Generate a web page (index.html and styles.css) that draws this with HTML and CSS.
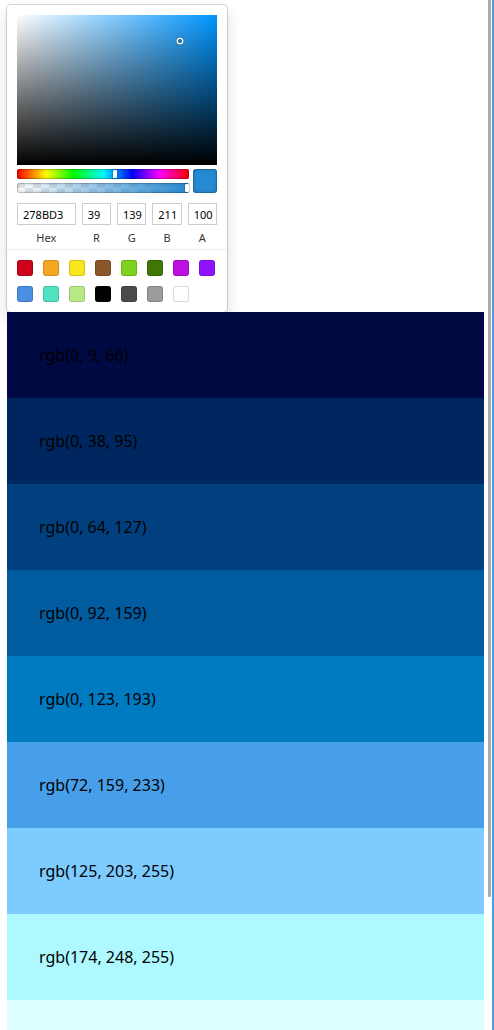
FILE: index.html
```html
<!DOCTYPE html>
<html>
<head>
<meta charset="utf-8">
<link rel="stylesheet" href="styles.css">
</head>
<body>
<div class="page">
  <main class="main">
    <div class="picker">
      <div class="saturation">
        <div class="sat-white"><div class="sat-black"></div></div>
        <div class="sat-pointer"></div>
      </div>
      <div class="controls">
        <div class="sliders">
          <div class="hue"><div class="hue-pointer"></div></div>
          <div class="alpha"><div class="alpha-pointer"></div></div>
        </div>
        <div class="active-color"></div>
      </div>
      <div class="fields">
        <label class="field double"><span class="input">278BD3</span><span class="label">Hex</span></label>
        <label class="field"><span class="input">39</span><span class="label">R</span></label>
        <label class="field"><span class="input">139</span><span class="label">G</span></label>
        <label class="field"><span class="input">211</span><span class="label">B</span></label>
        <label class="field"><span class="input">100</span><span class="label">A</span></label>
      </div>
      <div class="presets">
        <div class="preset" style="background:#D0021B"></div>
        <div class="preset" style="background:#F5A623"></div>
        <div class="preset" style="background:#F8E71C"></div>
        <div class="preset" style="background:#8B572A"></div>
        <div class="preset" style="background:#7ED321"></div>
        <div class="preset" style="background:#417505"></div>
        <div class="preset" style="background:#BD10E0"></div>
        <div class="preset" style="background:#9013FE"></div>
        <div class="preset" style="background:#4A90E2"></div>
        <div class="preset" style="background:#50E3C2"></div>
        <div class="preset" style="background:#B8E986"></div>
        <div class="preset" style="background:#000000"></div>
        <div class="preset" style="background:#4A4A4A"></div>
        <div class="preset" style="background:#9B9B9B"></div>
        <div class="preset" style="background:#FFFFFF"></div>
      </div>
    </div>
    <div class="rows">
      <div class="row" style="background:rgb(0, 9, 66)">rgb(0, 9, 66)</div>
      <div class="row" style="background:rgb(0, 38, 95)">rgb(0, 38, 95)</div>
      <div class="row" style="background:rgb(0, 64, 127)">rgb(0, 64, 127)</div>
      <div class="row" style="background:rgb(0, 92, 159)">rgb(0, 92, 159)</div>
      <div class="row" style="background:rgb(0, 123, 193)">rgb(0, 123, 193)</div>
      <div class="row" style="background:rgb(72, 159, 233)">rgb(72, 159, 233)</div>
      <div class="row" style="background:rgb(125, 203, 255)">rgb(125, 203, 255)</div>
      <div class="row" style="background:rgb(174, 248, 255)">rgb(174, 248, 255)</div>
      <div class="row last" style="background:rgb(222, 255, 255)"></div>
    </div>
  </main>
  <div class="track"><div class="thumb"></div></div>
  <div class="edge"></div>
</div>
</body>
</html>
```
FILE: styles.css
```css
html, body {
  margin: 0;
  padding: 0;
  height: 1030px;
  overflow: hidden;
  background: #fff;
}
body {
  font-family: "Noto Sans", "Open Sans", sans-serif;
}
.page {
  display: flex;
  height: 1030px;
}
.main {
  width: 477px;
  margin-left: 7px;
  padding-top: 5px;
  flex: none;
}
.picker {
  width: 200px;
  padding: 10px 10px 0;
  background: #fff;
  border-radius: 4px;
  box-shadow: rgba(0,0,0,.15) 0 0 0 1px, rgba(0,0,0,.15) 0 8px 16px;
}
.saturation {
  position: relative;
  height: 150px;
  background: hsl(205, 100%, 50%);
}
.sat-white {
  height: 100%;
  background: linear-gradient(to right, #fff, rgba(255,255,255,0));
}
.sat-black {
  height: 100%;
  background: linear-gradient(to top, #000, rgba(0,0,0,0));
}
.sat-pointer {
  position: absolute;
  left: 161px;
  top: 24px;
  width: 4px;
  height: 4px;
  border-radius: 50%;
  box-shadow: 0 0 0 1.5px #fff, inset 0 0 1px 1px rgba(0,0,0,.3), 0 0 1px 2px rgba(0,0,0,.4);
}
.controls {
  display: flex;
}
.sliders {
  flex: 1;
  padding: 4px 0;
}
.hue {
  position: relative;
  height: 10px;
  border-radius: 2px;
  background: linear-gradient(to right, #f00 0%, #ff0 17%, #0f0 33%, #0ff 50%, #00f 67%, #f0f 83%, #f00 100%);
  box-shadow: inset 0 0 0 1px rgba(0,0,0,.15), inset 0 0 4px rgba(0,0,0,.25);
}
.hue-pointer {
  position: absolute;
  left: 96px;
  top: 1px;
  width: 4px;
  height: 8px;
  border-radius: 1px;
  background: #fff;
  box-shadow: 0 0 2px rgba(0,0,0,.6);
}
.alpha {
  position: relative;
  height: 10px;
  margin-top: 4px;
  border-radius: 2px;
  background:
    linear-gradient(to right, rgba(39,139,211,0), rgb(39,139,211)),
    conic-gradient(#fff 0 25%, #e6e6e6 0 50%, #fff 0 75%, #e6e6e6 0) left center / 16px 16px;
  box-shadow: inset 0 0 0 1px rgba(0,0,0,.15), inset 0 0 4px rgba(0,0,0,.25);
}
.alpha-pointer {
  position: absolute;
  right: 0;
  top: 1px;
  width: 4px;
  height: 8px;
  border-radius: 1px;
  background: #fff;
  box-shadow: 0 0 2px rgba(0,0,0,.6);
}
.active-color {
  width: 24px;
  height: 24px;
  margin-top: 4px;
  margin-left: 4px;
  border-radius: 3px;
  background: rgb(39,139,211);
  box-shadow: inset 0 0 0 1px rgba(0,0,0,.15), inset 0 0 4px rgba(0,0,0,.25);
}
.fields {
  display: flex;
  padding-top: 6px;
}
.field {
  flex: 1;
  padding-left: 6px;
  display: flex;
  flex-direction: column;
}
.field.double {
  flex: 2;
  padding-left: 0;
}
.input {
  height: 22px;
  padding-left: 6px;
  display: flex;
  align-items: center;
  font-size: 11px;
  color: #000;
  box-shadow: inset 0 0 0 1px #ccc;
}
.label {
  display: block;
  text-align: center;
  font-size: 11px;
  color: #333;
  padding-top: 5px;
  padding-bottom: 4px;
  line-height: 15px;
}
.presets {
  display: flex;
  flex-wrap: wrap;
  margin: 0 -10px;
  padding: 10px 0 0 10px;
  border-top: 1px solid #eee;
}
.preset {
  width: 16px;
  height: 16px;
  margin: 0 10px 10px 0;
  border-radius: 3px;
  box-shadow: inset 0 0 0 1px rgba(0,0,0,.15);
}
.rows {
  display: flex;
  flex-direction: column;
}
.row {
  flex: none;
  height: 86px;
  display: flex;
  align-items: center;
  padding-left: 32px;
  font-size: 16px;
  color: #000;
}
.track {
  width: 3px;
  margin-left: 4px;
  flex: none;
}
.thumb {
  height: 897px;
  background: #ababab;
  border-radius: 0 0 1px 1px;
}
.edge {
  width: 2px;
  margin-left: 1px;
  background: #4a9fe2;
  flex: none;
}
```
